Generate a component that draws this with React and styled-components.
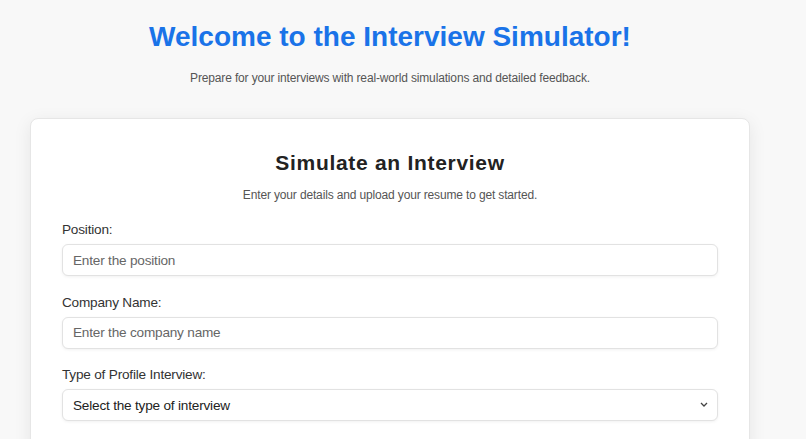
import React from 'react';
import styled, { createGlobalStyle } from 'styled-components';

const GlobalStyle = createGlobalStyle`
  html, body {
    margin: 0;
    padding: 0;
    background: #f8f8f8;
    font-family: "Liberation Sans", Arial, sans-serif;
  }
`;

const Page = styled.div`
  width: 780px;
  display: flex;
  flex-direction: column;
  align-items: center;
  padding-top: 21px;
`;

const Title = styled.h1`
  margin: 0;
  font-size: 28px;
  line-height: 32px;
  font-weight: bold;
  color: #1a73e8;
`;

const Lead = styled.p`
  margin: 18px 0 0;
  font-size: 12px;
  letter-spacing: -0.15px;
  line-height: 14px;
  color: #555;
`;

const Card = styled.div`
  box-sizing: border-box;
  width: 720px;
  margin-top: 33px;
  padding: 31px 31px 32px;
  background: #fff;
  border: 1px solid #e6e6e6;
  border-radius: 8px;
  box-shadow: 0 4px 18px rgba(0, 0, 0, 0.08);
`;

const CardTitle = styled.h2`
  margin: 0;
  text-align: center;
  font-size: 21px;
  line-height: 26px;
  font-weight: bold;
  letter-spacing: 0.7px;
  color: #222;
`;

const CardLead = styled.p`
  margin: 11px 0 0;
  text-align: center;
  font-size: 12px;
  letter-spacing: -0.15px;
  line-height: 16px;
  color: #555;
`;

const Form = styled.form`
  display: flex;
  flex-direction: column;
  gap: 18.5px;
  margin-top: 19px;
`;

const Field = styled.div`
  display: flex;
  flex-direction: column;
  gap: 6px;
`;

const Label = styled.label`
  font-size: 13.6px;
  letter-spacing: -0.2px;
  line-height: 16px;
  color: #333;
`;

const controlStyles = `
  box-sizing: border-box;
  height: 32px;
  width: 100%;
  padding: 0 10px;
  font-family: inherit;
  font-size: 13.6px;
  letter-spacing: -0.2px;
  color: #222;
  background: #fff;
  border: 1px solid #e2e2e2;
  border-radius: 6px;
  box-shadow: 0 1px 3px rgba(0, 0, 0, 0.06);
  outline: none;
`;

const Input = styled.input`
  ${controlStyles}

  &::placeholder {
    color: #666;
  }
`;

const SelectWrap = styled.div`
  position: relative;
`;

const Select = styled.select`
  ${controlStyles}
  appearance: none;
`;

const Chevron = styled.svg`
  position: absolute;
  right: 10px;
  top: 13px;
  pointer-events: none;
`;

export default function App() {
  return (
    <>
      <GlobalStyle />
      <Page>
        <Title>Welcome to the Interview Simulator!</Title>
        <Lead>Prepare for your interviews with real-world simulations and detailed feedback.</Lead>
        <Card>
          <CardTitle>Simulate an Interview</CardTitle>
          <CardLead>Enter your details and upload your resume to get started.</CardLead>
          <Form>
            <Field>
              <Label htmlFor="position">Position:</Label>
              <Input id="position" placeholder="Enter the position" />
            </Field>
            <Field>
              <Label htmlFor="company">Company Name:</Label>
              <Input id="company" placeholder="Enter the company name" />
            </Field>
            <Field>
              <Label htmlFor="type">Type of Profile Interview:</Label>
              <SelectWrap>
                <Select id="type" defaultValue="">
                  <option value="">Select the type of interview</option>
                </Select>
                <Chevron width="8" height="5" viewBox="0 0 8 5">
                  <path d="M1 1l3 3L7 1" fill="none" stroke="#444" strokeWidth="1.3" />
                </Chevron>
              </SelectWrap>
            </Field>
          </Form>
        </Card>
      </Page>
    </>
  );
}
